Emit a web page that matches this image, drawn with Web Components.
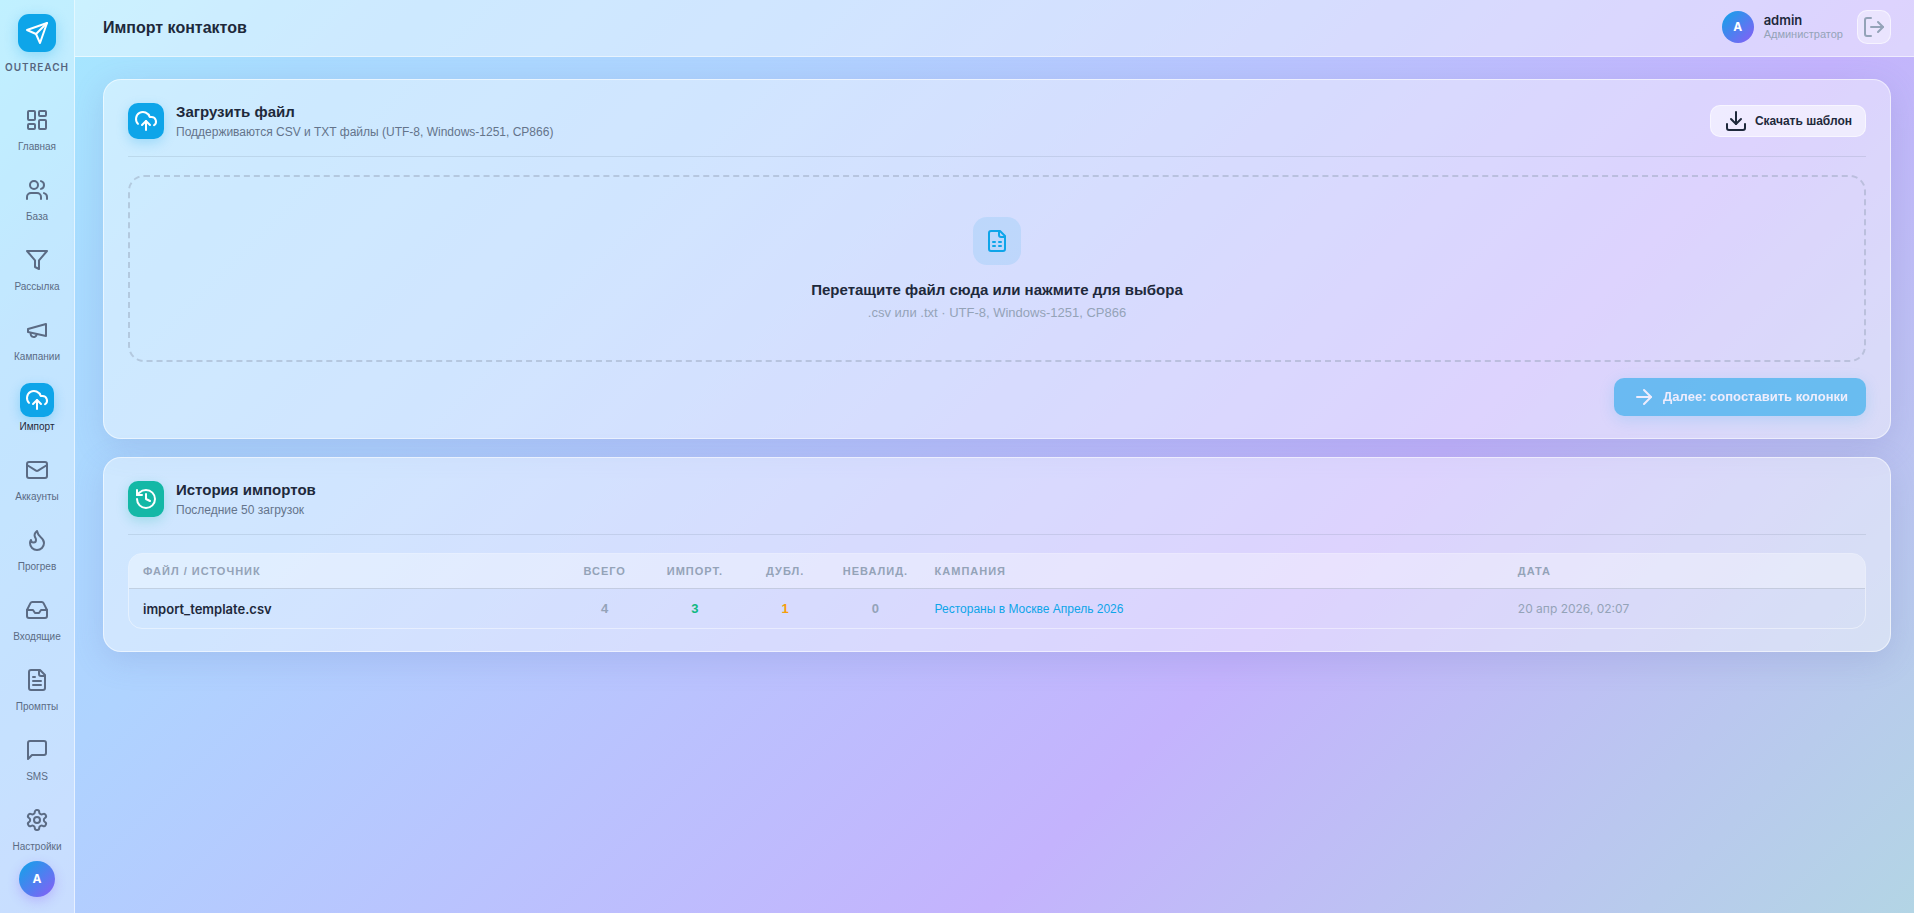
<!DOCTYPE html>
<html lang="ru">
<head>
<meta charset="utf-8">
<meta name="viewport" content="width=device-width, initial-scale=1">
<title>Импорт контактов</title>
<style>
  :root {
    --ink: #1e293b;
    --muted: #64748b;
    --faint: #94a3b8;
    --accent: #0ea5e9;
    --teal: #14b8a6;
    --glass: rgba(255, 255, 255, .42);
    --edge: rgba(255, 255, 255, .55);
    --latin: Inter, "Liberation Sans", sans-serif;
  }
  body {
    margin: 0;
    min-height: 100vh;
    color: var(--ink);
    font: 13px/16px "Liberation Sans", Arial, sans-serif;
    background: linear-gradient(135deg, #a5ebff 0%, #a9dbff 13%, #afd3ff 29%, #c4b3fd 67%, #b3d5e5 100%) fixed;
  }
</style>
</head>
<body>
<app-shell></app-shell>

<script>
const ICONS = {
  send: '<path d="m22 2-7 20-4-9-9-4Z"/><path d="M22 2 11 13"/>',
  dashboard: '<rect width="7" height="9" x="3" y="3" rx="1"/><rect width="7" height="5" x="14" y="3" rx="1"/><rect width="7" height="9" x="14" y="12" rx="1"/><rect width="7" height="5" x="3" y="16" rx="1"/>',
  users: '<path d="M16 21v-2a4 4 0 0 0-4-4H6a4 4 0 0 0-4 4v2"/><circle cx="9" cy="7" r="4"/><path d="M22 21v-2a4 4 0 0 0-3-3.87"/><path d="M16 3.13a4 4 0 0 1 0 7.75"/>',
  filter: '<polygon points="22 3 2 3 10 12.46 10 19 14 21 14 12.46 22 3"/>',
  megaphone: '<path d="m3 11 18-5v12L3 14v-3z"/><path d="M11.6 16.8a3 3 0 1 1-5.8-1.6"/>',
  upload: '<path d="M4 14.899A7 7 0 1 1 15.71 8h1.79a4.5 4.5 0 0 1 2.5 8.242"/><path d="M12 12v9"/><path d="m16 16-4-4-4 4"/>',
  mail: '<rect width="20" height="16" x="2" y="4" rx="2"/><path d="m22 7-8.97 5.7a1.94 1.94 0 0 1-2.06 0L2 7"/>',
  flame: '<path d="M8.5 14.5A2.5 2.5 0 0 0 11 12c0-1.38-.5-2-1-3-1.072-2.143-.224-4.054 2-6 .5 2.5 2 4.9 4 6.5 2 1.6 3 3.5 3 5.5a7 7 0 1 1-14 0c0-1.153.433-2.294 1-3a2.5 2.5 0 0 0 2.5 2.5z"/>',
  inbox: '<polyline points="22 12 16 12 14 15 10 15 8 12 2 12"/><path d="M5.45 5.11 2 12v6a2 2 0 0 0 2 2h16a2 2 0 0 0 2-2v-6l-3.45-6.89A2 2 0 0 0 16.76 4H7.24a2 2 0 0 0-1.79 1.11z"/>',
  file: '<path d="M15 2H6a2 2 0 0 0-2 2v16a2 2 0 0 0 2 2h12a2 2 0 0 0 2-2V7Z"/><path d="M14 2v4a2 2 0 0 0 2 2h4"/><path d="M10 9H8"/><path d="M16 13H8"/><path d="M16 17H8"/>',
  sheet: '<path d="M15 2H6a2 2 0 0 0-2 2v16a2 2 0 0 0 2 2h12a2 2 0 0 0 2-2V7Z"/><path d="M14 2v4a2 2 0 0 0 2 2h4"/><path d="M8 13h2"/><path d="M14 13h2"/><path d="M8 17h2"/><path d="M14 17h2"/>',
  message: '<path d="M21 15a2 2 0 0 1-2 2H7l-4 4V5a2 2 0 0 1 2-2h14a2 2 0 0 1 2 2z"/>',
  settings: '<path d="M12.22 2h-.44a2 2 0 0 0-2 2v.18a2 2 0 0 1-1 1.73l-.43.25a2 2 0 0 1-2 0l-.15-.08a2 2 0 0 0-2.73.73l-.22.38a2 2 0 0 0 .73 2.73l.15.1a2 2 0 0 1 1 1.72v.51a2 2 0 0 1-1 1.74l-.15.09a2 2 0 0 0-.73 2.73l.22.38a2 2 0 0 0 2.73.73l.15-.08a2 2 0 0 1 2 0l.43.25a2 2 0 0 1 1 1.73V20a2 2 0 0 0 2 2h.44a2 2 0 0 0 2-2v-.18a2 2 0 0 1 1-1.73l.43-.25a2 2 0 0 1 2 0l.15.08a2 2 0 0 0 2.73-.73l.22-.39a2 2 0 0 0-.73-2.73l-.15-.08a2 2 0 0 1-1-1.74v-.5a2 2 0 0 1 1-1.74l.15-.09a2 2 0 0 0 .73-2.73l-.22-.38a2 2 0 0 0-2.73-.73l-.15.08a2 2 0 0 1-2 0l-.43-.25a2 2 0 0 1-1-1.73V4a2 2 0 0 0-2-2z"/><circle cx="12" cy="12" r="3"/>',
  history: '<path d="M3 12a9 9 0 1 0 9-9 9.75 9.75 0 0 0-6.74 2.74L3 8"/><path d="M3 3v5h5"/><path d="M12 7v5l4 2"/>',
  download: '<path d="M21 15v4a2 2 0 0 1-2 2H5a2 2 0 0 1-2-2v-4"/><polyline points="7 10 12 15 17 10"/><path d="M12 15V3"/>',
  arrow: '<path d="M5 12h14"/><path d="m12 5 7 7-7 7"/>',
  logout: '<path d="M9 21H5a2 2 0 0 1-2-2V5a2 2 0 0 1 2-2h4"/><polyline points="16 17 21 12 16 7"/><path d="M21 12H9"/>'
};

class ShadowElement extends HTMLElement {
  constructor() {
    super();
    this.attachShadow({ mode: 'open' });
  }
  connectedCallback() {
    this.shadowRoot.innerHTML = `<style>*{box-sizing:border-box}</style>${this.render()}`;
  }
}

customElements.define('ui-icon', class extends ShadowElement {
  render() {
    return `<style>
      :host { display: block; flex: none; width: 24px; height: 24px; }
      svg { display: block; width: 100%; height: 100%; }
    </style>
    <svg viewBox="0 0 24 24" fill="none" stroke="currentColor" stroke-width="2"
      stroke-linecap="round" stroke-linejoin="round" aria-hidden="true">${ICONS[this.getAttribute('name')]}</svg>`;
  }
});

customElements.define('user-avatar', class extends ShadowElement {
  render() {
    return `<style>
      :host {
        display: grid; place-items: center; flex: none; width: 32px; height: 32px; border-radius: 50%;
        background: linear-gradient(135deg, #0ea5e9, #8b5cf6); color: #fff;
        font: 700 12px/16px var(--latin);
      }
    </style><slot></slot>`;
  }
});

customElements.define('nav-item', class extends ShadowElement {
  render() {
    return `<style>
      :host { display: block; flex: none; }
      a {
        display: flex; flex-direction: column; align-items: center; gap: 3px; padding: 8px 0;
        color: #5b6b84; text-decoration: none; font-size: 10px; line-height: 13px;
      }
      .box { display: grid; place-items: center; width: 34px; height: 34px; border-radius: 10px; }
      :host([active]) a { color: var(--ink); }
      :host([active]) .box { background: var(--accent); color: #fff; box-shadow: 0 4px 12px rgba(14, 165, 233, .3); }
    </style>
    <a href="#${this.getAttribute('icon')}"><span class="box"><ui-icon name="${this.getAttribute('icon')}"></ui-icon></span><slot></slot></a>`;
  }
});

customElements.define('side-bar', class extends ShadowElement {
  render() {
    return `<style>
      :host {
        display: flex; flex-direction: column; align-items: center; flex: none; width: 75px; height: 100vh;
        position: sticky; top: 0; box-sizing: border-box; padding: 14px 0 16px;
        background: rgba(255, 255, 255, .3); border-right: 1px solid var(--edge);
      }
      .logo {
        display: grid; place-items: center; width: 38px; height: 38px; border-radius: 11px; flex: none;
        background: var(--accent); color: #fff; box-shadow: 0 4px 14px rgba(14, 165, 233, .3);
      }
      .brand { margin: 9px 0 22px; font: 600 10px/12px var(--latin); letter-spacing: 1px; color: #55657e; }
      nav { display: flex; flex-direction: column; gap: 4px; flex: 1; min-height: 0; width: 100%; overflow: hidden; margin-bottom: 10px; }
      user-avatar { width: 36px; height: 36px; box-shadow: 0 4px 12px rgba(139, 92, 246, .3); }
    </style>
    <div class="logo"><ui-icon name="send"></ui-icon></div>
    <div class="brand">OUTREACH</div>
    <nav aria-label="Разделы">
      <nav-item icon="dashboard">Главная</nav-item>
      <nav-item icon="users">База</nav-item>
      <nav-item icon="filter">Рассылка</nav-item>
      <nav-item icon="megaphone">Кампании</nav-item>
      <nav-item icon="upload" active>Импорт</nav-item>
      <nav-item icon="mail">Аккаунты</nav-item>
      <nav-item icon="flame">Прогрев</nav-item>
      <nav-item icon="inbox">Входящие</nav-item>
      <nav-item icon="file">Промпты</nav-item>
      <nav-item icon="message">SMS</nav-item>
      <nav-item icon="settings">Настройки</nav-item>
    </nav>
    <user-avatar>A</user-avatar>`;
  }
});

customElements.define('top-bar', class extends ShadowElement {
  render() {
    return `<style>
      :host {
        display: flex; align-items: center; box-sizing: border-box; height: 57px; padding: 0 23px 2px 28px;
        background: var(--glass); border-bottom: 1px solid var(--edge);
      }
      h1 { margin: 0 auto 0 0; padding-top: 2px; font-size: 16px; line-height: 20px; font-weight: 700; }
      .who { margin: 0 14px 0 10px; }
      .name { font: 600 13px/15px var(--latin); }
      .role { font-size: 11px; line-height: 13px; color: var(--faint); }
      button {
        display: grid; place-items: center; width: 34px; height: 34px; padding: 0; border-radius: 10px;
        background: rgba(255, 255, 255, .4); border: 1px solid var(--edge); color: var(--faint);
      }
    </style>
    <h1><slot></slot></h1>
    <user-avatar>A</user-avatar>
    <div class="who"><div class="name">admin</div><div class="role">Администратор</div></div>
    <button type="button" aria-label="Выйти"><ui-icon name="logout"></ui-icon></button>`;
  }
});

customElements.define('glass-card', class extends ShadowElement {
  render() {
    return `<style>
      :host {
        display: block; box-sizing: border-box; padding: 23px 24px 22px; border-radius: 18px;
        background: var(--glass); border: 1px solid var(--edge); box-shadow: 0 8px 32px rgba(100, 116, 180, .2);
      }
      header {
        display: flex; align-items: center; gap: 12px; padding-bottom: 17px; margin-bottom: 18px;
        border-bottom: 1px solid rgba(100, 116, 139, .16);
      }
      .badge { display: grid; place-items: center; width: 36px; height: 36px; border-radius: 10px; color: #fff;
        background: var(--accent); box-shadow: 0 4px 12px rgba(14, 165, 233, .25); }
      :host([tone=teal]) .badge { background: var(--teal); box-shadow: 0 4px 12px rgba(20, 184, 166, .25); }
      .titles { flex: 1; }
      h2 { margin: 0 0 4px; font-size: 15px; line-height: 18px; font-weight: 700; }
      p { margin: 0; font-size: 12px; line-height: 14px; color: var(--muted); }
    </style>
    <header>
      <span class="badge"><ui-icon name="${this.getAttribute('icon')}"></ui-icon></span>
      <div class="titles"><h2><slot name="title"></slot></h2><p><slot name="note"></slot></p></div>
      <slot name="action"></slot>
    </header>
    <slot></slot>`;
  }
});

customElements.define('ui-button', class extends ShadowElement {
  render() {
    const off = this.hasAttribute('disabled') ? 'disabled' : '';
    return `<style>
      :host { display: block; }
      button {
        display: flex; align-items: center; gap: 7px; height: 32px; padding: 0 13px; border-radius: 10px;
        border: 1px solid var(--edge); background: rgba(255, 255, 255, .55); color: var(--ink);
        font: 700 12px/16px "Liberation Sans", Arial, sans-serif;
      }
      :host([primary]) button {
        height: 38px; padding: 0 18px; border: 0; background: var(--accent); color: #fff; font-size: 13px;
        box-shadow: 0 4px 16px rgba(14, 165, 233, .3);
      }
      button:disabled { opacity: .55; }
    </style>
    <button type="button" ${off}><ui-icon name="${this.getAttribute('icon')}"></ui-icon><slot></slot></button>`;
  }
});

customElements.define('drop-zone', class extends ShadowElement {
  render() {
    return `<style>
      :host { display: block; }
      label {
        display: flex; flex-direction: column; align-items: center; padding: 40px 24px 38px; border-radius: 16px;
        border: 2px dashed rgba(148, 163, 184, .45); position: relative;
      }
      input { position: absolute; inset: 0; opacity: 0; width: 100%; height: 100%; }
      .badge { display: grid; place-items: center; width: 48px; height: 48px; border-radius: 14px;
        color: var(--accent); background: rgba(14, 165, 233, .12); }
      b { margin: 15px 0 4px; font-size: 15px; line-height: 20px; }
      small { font-size: 13px; line-height: 18px; color: var(--faint); }
    </style>
    <label for="f">
      <span class="badge"><ui-icon name="sheet"></ui-icon></span>
      <b>Перетащите файл сюда или нажмите для выбора</b>
      <small>.csv или .txt · UTF-8, Windows-1251, CP866</small>
      <input id="f" type="file" accept=".csv,.txt">
    </label>`;
  }
});

customElements.define('import-history', class extends ShadowElement {
  render() {
    return `<style>
      :host { display: block; border: 1px solid rgba(255, 255, 255, .45); border-radius: 14px; overflow: hidden; }
      table { width: 100%; table-layout: fixed; border-collapse: separate; border-spacing: 0; }
      th, td { padding: 0 14px; text-align: left; white-space: nowrap; }
      th {
        height: 35px; font-size: 11px; line-height: 14px; letter-spacing: 1px; color: var(--faint);
        background: rgba(255, 255, 255, .35); border-bottom: 1px solid rgba(100, 116, 139, .25);
      }
      td { height: 39px; font-size: 12px; line-height: 16px; }
      .n { padding: 0; text-align: center; }
      td.n { font-size: 13px; font-weight: 700; color: var(--faint); }
      td.ok { color: #10b981; }
      td.dup { color: #f59e0b; }
      .src { font: 600 13px/16px var(--latin); }
      td.date { font-family: var(--latin); color: var(--faint); }
      a { color: var(--accent); text-decoration: none; }
      .c1 { width: 24.8%; } .cn { width: 5.2%; } .c2 { width: 33.6%; }
    </style>
    <table>
      <colgroup><col class="c1"><col class="cn"><col class="cn"><col class="cn"><col class="cn"><col class="c2"><col></colgroup>
      <thead><tr><th>ФАЙЛ / ИСТОЧНИК</th><th class="n">ВСЕГО</th><th class="n">ИМПОРТ.</th><th class="n">ДУБЛ.</th><th class="n">НЕВАЛИД.</th><th>КАМПАНИЯ</th><th>ДАТА</th></tr></thead>
      <tbody><tr><td class="src">import_template.csv</td><td class="n">4</td><td class="n ok">3</td><td class="n dup">1</td><td class="n">0</td><td><a href="#campaign">Рестораны в Москве Апрель 2026</a></td><td class="date">20 апр 2026, 02:07</td></tr></tbody>
    </table>`;
  }
});

customElements.define('app-shell', class extends ShadowElement {
  render() {
    return `<style>
      :host { display: flex; min-height: 100vh; }
      .page { flex: 1; min-width: 0; }
      main { display: flex; flex-direction: column; gap: 18px; padding: 22px 23px 22px 28px; }
      .actions { display: flex; justify-content: flex-end; margin-top: 16px; }
    </style>
    <side-bar></side-bar>
    <div class="page">
      <top-bar>Импорт контактов</top-bar>
      <main>
        <glass-card icon="upload">
          <span slot="title">Загрузить файл</span>
          <span slot="note">Поддерживаются CSV и TXT файлы (UTF-8, Windows-1251, CP866)</span>
          <ui-button slot="action" icon="download">Скачать шаблон</ui-button>
          <drop-zone></drop-zone>
          <div class="actions"><ui-button primary disabled icon="arrow">Далее: сопоставить колонки</ui-button></div>
        </glass-card>
        <glass-card icon="history" tone="teal">
          <span slot="title">История импортов</span>
          <span slot="note">Последние 50 загрузок</span>
          <import-history></import-history>
        </glass-card>
      </main>
    </div>`;
  }
});
</script>
</body>
</html>
